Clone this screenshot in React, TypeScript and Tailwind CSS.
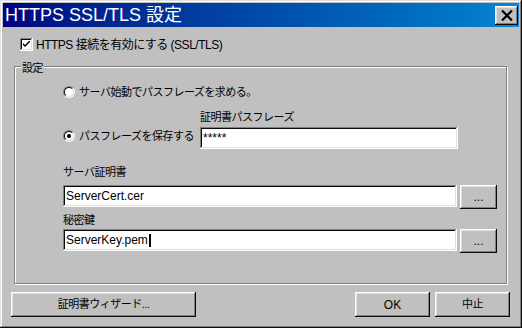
import React from "react";

const raised =
  "shadow-[inset_-1px_-1px_#0a0a0a,inset_1px_1px_#ffffff,inset_-2px_-2px_#808080,inset_2px_2px_#dfdfdf]";
const sunken =
  "shadow-[inset_-1px_-1px_#ffffff,inset_1px_1px_#808080,inset_-2px_-2px_#dfdfdf,inset_2px_2px_#0a0a0a]";
// japanese labels: the original bitmap font is narrower than Noto
const jp = "text-[11px] tracking-[-0.5px] whitespace-nowrap";

function Radio({ checked }: { checked?: boolean }) {
  return (
    <div className="flex h-[12px] w-[12px] shrink-0 items-center justify-center rounded-full border border-t-[#808080] border-l-[#808080] border-b-white border-r-white">
      <div className="flex h-[10px] w-[10px] items-center justify-center rounded-full border border-t-[#0a0a0a] border-l-[#0a0a0a] border-b-[#dfdfdf] border-r-[#dfdfdf] bg-white">
        {checked && <div className="h-[4px] w-[4px] rounded-full bg-black" />}
      </div>
    </div>
  );
}

function Field({ value, width, caret }: { value: string; width: string; caret?: boolean }) {
  return (
    <div className={`flex h-[22px] items-center bg-white pl-[3px] ${width} ${sunken}`}>
      <span className="leading-none">{value}</span>
      {caret && <span className="ml-[1px] h-[13px] w-[2px] bg-black" />}
    </div>
  );
}

function Button({ children, className }: { children: React.ReactNode; className: string }) {
  return (
    <div className={`flex items-center justify-center bg-[#c0c0c0] ${raised} ${className}`}>
      {children}
    </div>
  );
}

export default function App() {
  return (
    <div
      className="flex h-[328px] w-[522px] flex-col bg-[#c0c0c0] p-[3px] text-[12px] text-black shadow-[inset_-1px_-1px_#0a0a0a,inset_1px_1px_#dfdfdf,inset_-2px_-2px_#808080,inset_2px_2px_#ffffff]"
      style={{ fontFamily: '"Liberation Sans", "Noto Sans CJK JP", sans-serif' }}
    >
      {/* title bar */}
      <div className="flex h-[24px] items-center justify-between bg-gradient-to-r from-[#000080] to-[#1084d0] pl-[2px] pr-[1px]">
        <span className="text-[18px] leading-none text-white">HTTPS SSL/TLS 設定</span>
        <div className={`flex h-[19px] w-[23px] items-center justify-center bg-[#c0c0c0] ${raised}`}>
          <svg width="12" height="11" viewBox="0 0 12 11">
            <path d="M1 0.5 L11 10.5 M11 0.5 L1 10.5" stroke="#000" strokeWidth="2.2" />
          </svg>
        </div>
      </div>

      {/* enable checkbox */}
      <div className="mt-[11px] flex h-[13px] items-center gap-[3px] pl-[17px]">
        <div className={`flex h-[13px] w-[13px] items-center justify-center bg-white ${sunken}`}>
          <svg width="7" height="7" viewBox="0 0 7 7">
            <path d="M0 2 L0 4 L2 6 L7 1 L7 -1 L2 4 Z" fill="#000" />
          </svg>
        </div>
        <span className="leading-none tracking-[-0.5px]">HTTPS 接続を有効にする (SSL/TLS)</span>
      </div>

      {/* group box */}
      <div className="relative ml-[11px] mt-[15px] h-[218px] w-[493px] border border-[#808080] pl-[48px] pt-[17px] shadow-[inset_1px_1px_#ffffff,1px_1px_#ffffff]">
        <span className={`absolute left-[6px] top-[-7px] h-[16px] bg-[#c0c0c0] px-[1px] leading-[16px] ${jp}`}>設定</span>

        <div className="flex h-[16px] items-center gap-[4px]">
          <Radio />
          <span className={jp}>サーバ始動でパスフレーズを求める。</span>
        </div>

        <div className="mt-[9px] flex">
          <div className="w-[137px] shrink-0 pt-[19px]">
            <div className="flex h-[16px] items-center gap-[4px]">
              <Radio checked />
              <span className={jp}>パスフレーズを保存する</span>
            </div>
          </div>
          <div className="flex flex-col">
            <span className={`h-[16px] leading-[16px] ${jp}`}>証明書パスフレーズ</span>
            <div className="mt-[2px]">
              <Field value="*****" width="w-[258px]" />
            </div>
          </div>
        </div>

        <div className={`mt-[15px] h-[16px] leading-[16px] ${jp}`}>サーバ証明書</div>
        <div className="mt-[5px] flex items-start gap-[3px]">
          <Field value="ServerCert.cer" width="w-[394px]" />
          <Button className="h-[24px] w-[37px]">...</Button>
        </div>

        <div className={`mt-[3px] h-[16px] leading-[16px] ${jp}`}>秘密鍵</div>
        <div className="mt-[1px] flex items-start gap-[3px]">
          <Field value="ServerKey.pem" width="w-[394px]" caret />
          <Button className="h-[24px] w-[37px]">...</Button>
        </div>
      </div>

      {/* bottom buttons */}
      <div className="mt-[8px] flex justify-between pl-[8px] pr-[9px]">
        <Button className="h-[25px] w-[185px]">
          <span className={jp}>証明書ウィザード...</span>
        </Button>
        <div className="flex gap-[5px]">
          <Button className="h-[25px] w-[75px]">OK</Button>
          <Button className="h-[25px] w-[75px]">
            <span className={jp}>中止</span>
          </Button>
        </div>
      </div>
    </div>
  );
}
